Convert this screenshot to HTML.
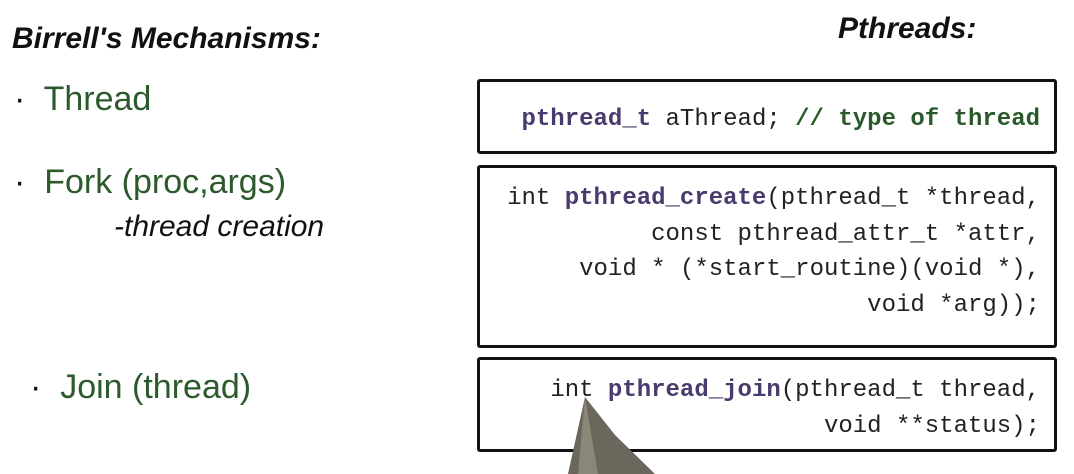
<!DOCTYPE html>
<html><head><style>
body{margin:0;width:1074px;height:474px;background:#fff;position:relative;overflow:hidden;font-family:"Liberation Sans",sans-serif}
.h{position:absolute;white-space:nowrap}
.box{position:absolute;left:477px;width:580px;border:3.5px solid #111;border-radius:3px;box-sizing:border-box}
pre{position:absolute;right:14px;margin:0;font-family:"Liberation Mono",monospace;font-size:24px;line-height:35.5px;text-align:right;color:#222}
.p{color:#4a3a6e;font-weight:bold}
.g{color:#2a5a2a;font-weight:bold}
</style></head><body>
<div class="h" style="left:12px;top:22px;font-size:30px;color:#111;font-weight:bold;font-style:italic">Birrell's Mechanisms:</div>
<div class="h" style="left:838px;top:12px;font-size:30px;color:#111;font-weight:bold;font-style:italic">Pthreads:</div>
<div class="h" style="left:14px;top:80px;font-size:34px;color:#2c5a2c"><span style="color:#111">·</span>&nbsp; Thread</div>
<div class="h" style="left:14px;top:163px;font-size:34px;color:#2c5a2c"><span style="color:#111">·</span>&nbsp; Fork (proc,args)</div>
<div class="h" style="left:114px;top:210px;font-size:30px;color:#111;font-style:italic">-thread creation</div>
<div class="h" style="left:30px;top:368px;font-size:34px;color:#2c5a2c"><span style="color:#111">·</span>&nbsp; Join (thread)</div>
<div class="box" style="top:79px;height:75px"><pre style="top:20px"><span class="p">pthread_t</span> aThread; <span class="g">// type of thread</span></pre></div>
<div class="box" style="top:165px;height:183px"><pre style="top:13px">int <span class="p">pthread_create</span>(pthread_t *thread,
const pthread_attr_t *attr,
void * (*start_routine)(void *),
void *arg));</pre></div>
<div class="box" style="top:357px;height:95px"><pre style="top:13px">int <span class="p">pthread_join</span>(pthread_t thread,
void **status);</pre></div>
<svg style="position:absolute;left:0;top:0" width="1074" height="474"><polygon points="585,397 568,474 655,474 615,435" fill="#6b675c"/><polygon points="585,397 578,474 598,474" fill="#8a8678"/></svg>
</body></html>
